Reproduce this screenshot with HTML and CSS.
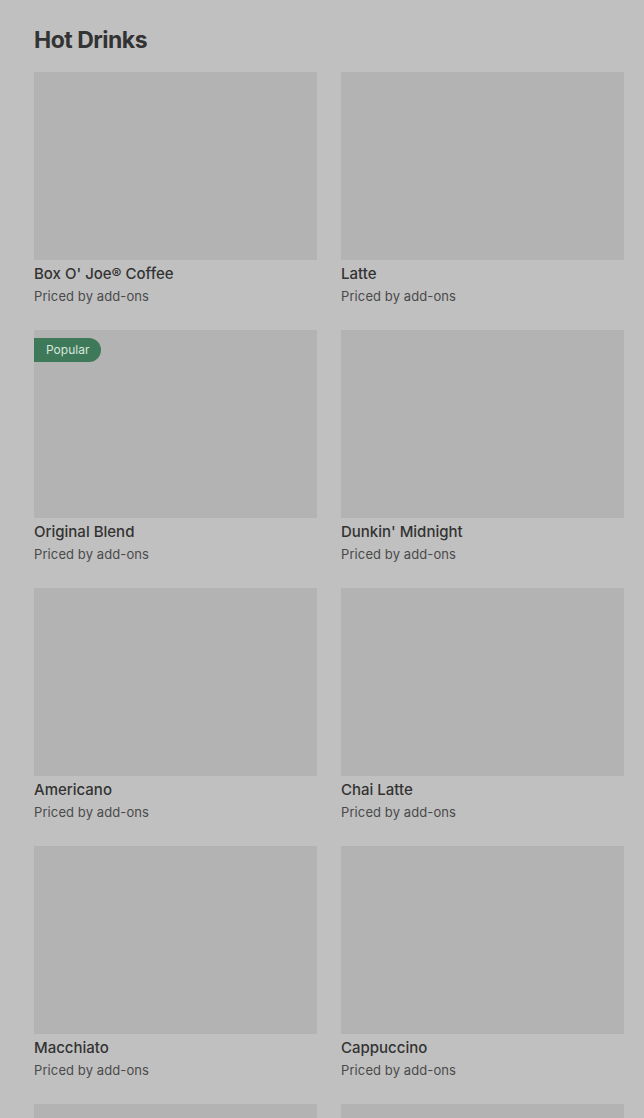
FILE: index.html
```html
<!DOCTYPE html>
<html>
	<head>
		<meta charset="UTF-8">
		<title>Hot Drinks</title>
		<link rel="stylesheet" href="styles.css">
	</head>
	<body>
		<div class="menu">
			<h2 class="menu-title">Hot Drinks</h2>
			<ul class="menu-grid">
				<li class="item">
					<div class="item-img"></div>
					<div class="item-name">Box O' Joe® Coffee</div>
					<div class="item-price">Priced by add-ons</div>
				</li>
				<li class="item">
					<div class="item-img"></div>
					<div class="item-name">Latte</div>
					<div class="item-price">Priced by add-ons</div>
				</li>
				<li class="item">
					<div class="item-img">
						<span class="badge">Popular</span>
					</div>
					<div class="item-name">Original Blend</div>
					<div class="item-price">Priced by add-ons</div>
				</li>
				<li class="item">
					<div class="item-img"></div>
					<div class="item-name">Dunkin' Midnight</div>
					<div class="item-price">Priced by add-ons</div>
				</li>
				<li class="item">
					<div class="item-img"></div>
					<div class="item-name">Americano</div>
					<div class="item-price">Priced by add-ons</div>
				</li>
				<li class="item">
					<div class="item-img"></div>
					<div class="item-name">Chai Latte</div>
					<div class="item-price">Priced by add-ons</div>
				</li>
				<li class="item">
					<div class="item-img"></div>
					<div class="item-name">Macchiato</div>
					<div class="item-price">Priced by add-ons</div>
				</li>
				<li class="item">
					<div class="item-img"></div>
					<div class="item-name">Cappuccino</div>
					<div class="item-price">Priced by add-ons</div>
				</li>
				<li class="item">
					<div class="item-img"></div>
				</li>
				<li class="item">
					<div class="item-img"></div>
				</li>
			</ul>
		</div>
	</body>
</html>
```
FILE: styles.css
```css
* {
	margin: 0;
	padding: 0;
	box-sizing: border-box;
}

html,
body {
	height: 100%;
	overflow: hidden;
}

body {
	background-color: #c0c0c0;
	font-family: Inter, "Noto Sans", sans-serif;
	color: #333;
}

.menu {
	padding: 26px 20px 0 34px;
}

.menu-title {
	font-size: 23px;
	font-weight: 700;
	line-height: 28px;
	letter-spacing: -0.5px;
	color: #333;
	margin-bottom: 18px;
}

.menu-grid {
	list-style: none;
	display: grid;
	grid-template-columns: 283px 283px;
	column-gap: 24px;
	row-gap: 25px;
}

.item-img {
	position: relative;
	height: 188px;
	background-color: #b3b3b3;
}

.badge {
	position: absolute;
	top: 8px;
	left: 0;
	height: 24px;
	line-height: 24px;
	padding: 0 12px;
	font-size: 12px;
	color: #d9e6dc;
	background-color: #3e7a59;
	border-radius: 0 12px 12px 0;
}

.item-name {
	margin-top: 4px;
	font-size: 15px;
	font-weight: 500;
	line-height: 19px;
	color: #333;
}

.item-price {
	margin-top: 4px;
	font-size: 13px;
	line-height: 18px;
	letter-spacing: 0.1px;
	color: #4a4a4a;
}
```
